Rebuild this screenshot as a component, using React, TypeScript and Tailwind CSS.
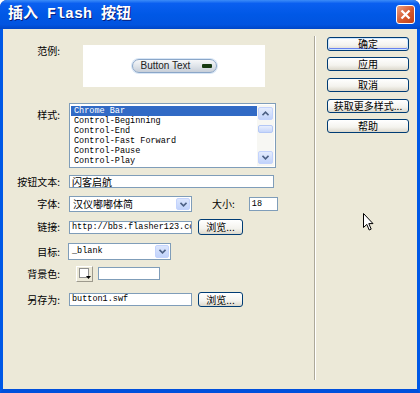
const cjk = "font-['Noto_Sans_CJK_SC',sans-serif]";
const mono = "font-['Liberation_Mono','Noto_Sans_CJK_SC',monospace]";

function Label({ text, className = "" }: { text: string; className?: string }) {
  return (
    <div className={`w-[57px] shrink-0 text-right text-[10px] leading-[12px] text-black ${cjk} ${className}`}>
      {text}
    </div>
  );
}

function XpButton({ text, primary = false, className = "" }: { text: string; primary?: boolean; className?: string }) {
  return (
    <div
      className={`flex items-center justify-center rounded-[3px] border border-[#003c74] bg-[linear-gradient(#ffffff,#f4f3ee_60%,#dcd8cc)] text-[10px] leading-[12px] text-black ${cjk} ${
        primary ? "shadow-[inset_0_0_0_1px_#cee7ff,inset_0_-1px_0_1px_#6982ee]" : ""
      } ${className}`}
    >
      {text}
    </div>
  );
}

function Input({ value, textClass, className = "" }: { value: string; textClass?: string; className?: string }) {
  return (
    <div
      className={`flex items-center overflow-hidden whitespace-nowrap border border-[#7f9db9] bg-white pl-[2px] text-black ${
        textClass ?? `text-[8.5px] leading-[11px] ${mono}`
      } ${className}`}
    >
      {value}
    </div>
  );
}

function Chevron({ up = false }: { up?: boolean }) {
  return (
    <svg width="7" height="5" viewBox="0 0 7 5" className={up ? "rotate-180" : ""}>
      <path d="M0.5 0.8 L3.5 3.8 L6.5 0.8" fill="none" stroke="#4d6185" strokeWidth="1.6" />
    </svg>
  );
}

function Select({ value, valueClass, className = "" }: { value: string; valueClass: string; className?: string }) {
  return (
    <div className={`flex items-stretch border border-[#7f9db9] bg-white p-[1px] ${className}`}>
      <div className={`flex flex-1 items-center whitespace-nowrap pl-[2px] text-black ${valueClass}`}>{value}</div>
      <div className="flex w-[14px] items-center justify-center rounded-[2px] border border-[#c3d3fd] bg-[linear-gradient(#dce6fd,#c1d3fb)]">
        <Chevron />
      </div>
    </div>
  );
}

const styles = ["Chrome Bar", "Control-Beginning", "Control-End", "Control-Fast Forward", "Control-Pause", "Control-Play"];

function StyleList() {
  return (
    <div className="flex h-[65px] w-[207px] border border-[#7f9db9] bg-white p-[1px]">
      <div className="flex-1 pt-[1px]">
        {styles.map((s, i) => (
          <div
            key={s}
            className={`h-[10px] whitespace-nowrap pl-[3px] text-[8.5px] leading-[10px] ${mono} ${
              i === 0 ? "bg-[#316ac5] text-white" : "text-black"
            }`}
          >
            {s}
          </div>
        ))}
      </div>
      <div className="flex w-[17px] flex-col items-center bg-[#f7f7f3] py-[2px]">
        <div className="flex h-[13px] w-[15px] items-center justify-center rounded-[2px] border border-[#c3d3fd] bg-[linear-gradient(#e4ecfd,#c1d3fb)]">
          <Chevron up />
        </div>
        <div className="mt-[5px] h-[8px] w-[15px] rounded-[2px] border border-[#b4c8f6] bg-[linear-gradient(#e9effd,#c6d6fb)]" />
        <div className="flex-1" />
        <div className="flex h-[13px] w-[15px] items-center justify-center rounded-[2px] border border-[#c3d3fd] bg-[linear-gradient(#e4ecfd,#c1d3fb)]">
          <Chevron />
        </div>
      </div>
    </div>
  );
}

export default function App() {
  return (
    <div className="relative flex h-[393px] w-[420px] flex-col overflow-hidden rounded-t-[7px] bg-[#0831a8]">
      {/* title bar */}
      <div className="flex h-[29px] shrink-0 items-center justify-between bg-[linear-gradient(#3c8cf8,#0a5ff0_12%,#0058e6_50%,#0154e0_85%,#0046c8)] pl-[8px] pr-[5px]">
        <span className={`text-[15px] font-bold leading-none text-white [text-shadow:1px_1px_0_#0a1e7a] ${mono}`}>
          插入 Flash 按钮
        </span>
        <div className="flex h-[19px] w-[19px] items-center justify-center rounded-[3px] border border-white bg-[linear-gradient(135deg,#eba083,#d5582d_55%,#c04018)]">
          <svg width="11" height="11" viewBox="0 0 11 11">
            <path d="M1.5 1.5 L9.5 9.5 M9.5 1.5 L1.5 9.5" stroke="white" strokeWidth="2.3" />
          </svg>
        </div>
      </div>

      {/* body with frame */}
      <div className="flex flex-1 border-x-[3px] border-b-[4px] border-x-[#0058e6] border-b-[#0050dc]">
        <div className="flex flex-1 bg-[#ece9d8]">
          {/* left form */}
          <div className="flex w-[311px] flex-col">
            <div className="mt-[16px] flex items-start">
              <Label text="范例:" />
              <div className="ml-[23px] flex h-[42px] w-[182px] items-center justify-center bg-white">
                <div className="flex h-[14px] w-[85px] items-center justify-between rounded-full border border-[#8aa6c8] bg-[linear-gradient(#f6f7f9,#dfe4ea_50%,#c7ced8)] pl-[8px] pr-[4px] shadow-[0_0_0_1px_#d8e6f6]">
                  <span className="font-['Liberation_Sans',sans-serif] text-[10px] leading-none text-[#222]">Button Text</span>
                  <span className="h-[4px] w-[10px] rounded-[1px] bg-[#163a12]" />
                </div>
              </div>
            </div>

            <div className="mt-[16px] flex items-start">
              <Label text="样式:" className="mt-[6px]" />
              <div className="ml-[9px]">
                <StyleList />
              </div>
            </div>

            <div className="mt-[7px] flex items-center">
              <Label text="按钮文本:" />
              <Input value="闪客启航" textClass={`text-[10px] leading-[11px] ${cjk}`} className="ml-[9px] h-[13px] w-[205px]" />
            </div>

            <div className="mt-[8px] flex h-[16px] items-center">
              <Label text="字体:" />
              <Select value="汉仪嘟嘟体简" valueClass={`text-[10px] leading-[12px] ${cjk}`} className="ml-[9px] h-[16px] w-[123px]" />
              <div className={`ml-[20px] text-[10px] leading-[12px] ${cjk}`}>大小:</div>
              <Input value="18" className="ml-[14px] h-[14px] w-[29px]" />
            </div>

            <div className="mt-[7px] flex h-[16px] items-center">
              <Label text="链接:" />
              <Input value="http://bbs.flasher123.com" className="ml-[9px] h-[13px] w-[123px]" />
              <XpButton text="浏览..." className="ml-[6px] h-[16px] w-[45px]" />
            </div>

            <div className="mt-[8px] flex h-[17px] items-center">
              <Label text="目标:" />
              <Select value="_blank" valueClass={`text-[8.5px] leading-[11px] ${mono}`} className="ml-[8px] h-[17px] w-[103px]" />
            </div>

            <div className="mt-[5px] flex h-[17px] items-center">
              <Label text="背景色:" />
              <div className="relative ml-[16px] flex h-[16px] w-[17px] items-center justify-center border border-b-[#9d9a8d] border-l-white border-r-[#9d9a8d] border-t-white bg-[#ece9d8]">
                <div className="mb-[2px] mr-[2px] h-[10px] w-[10px] border border-[#8f8f8f] bg-white" />
                <svg width="5" height="3" viewBox="0 0 5 3" className="absolute bottom-[2px] right-[1px]">
                  <path d="M0 0 H5 L2.5 3 Z" fill="black" />
                </svg>
              </div>
              <div className="ml-[5px] h-[13px] w-[62px] border border-[#7f9db9] bg-white" />
            </div>

            <div className="mt-[10px] flex h-[15px] items-center">
              <Label text="另存为:" />
              <Input value="button1.swf" className="ml-[9px] h-[13px] w-[123px]" />
              <XpButton text="浏览..." className="ml-[6px] h-[15px] w-[45px]" />
            </div>
          </div>

          {/* separator */}
          <div className="mt-[7px] flex h-[344px]">
            <div className="w-[1px] bg-[#aca899]" />
            <div className="w-[1px] bg-white" />
          </div>

          {/* right buttons */}
          <div className="flex flex-col pl-[11px] pt-[8px]">
            <XpButton text="确定" primary className="h-[14px] w-[82px]" />
            <XpButton text="应用" className="mt-[6px] h-[14px] w-[82px]" />
            <XpButton text="取消" className="mt-[7px] h-[14px] w-[82px]" />
            <XpButton text="获取更多样式..." className="mt-[7px] h-[14px] w-[82px]" />
            <XpButton text="帮助" className="mt-[6px] h-[14px] w-[82px]" />
          </div>
        </div>
      </div>

      {/* mouse pointer */}
      <svg width="11" height="18" viewBox="0 0 11 18" className="absolute left-[363px] top-[213px]">
        <path d="M0.5 0.5 L0.5 14.5 L3.8 11.4 L6.2 17 L8.2 16.1 L5.8 10.6 L10 10.6 Z" fill="white" stroke="black" strokeWidth="1" />
      </svg>
    </div>
  );
}
